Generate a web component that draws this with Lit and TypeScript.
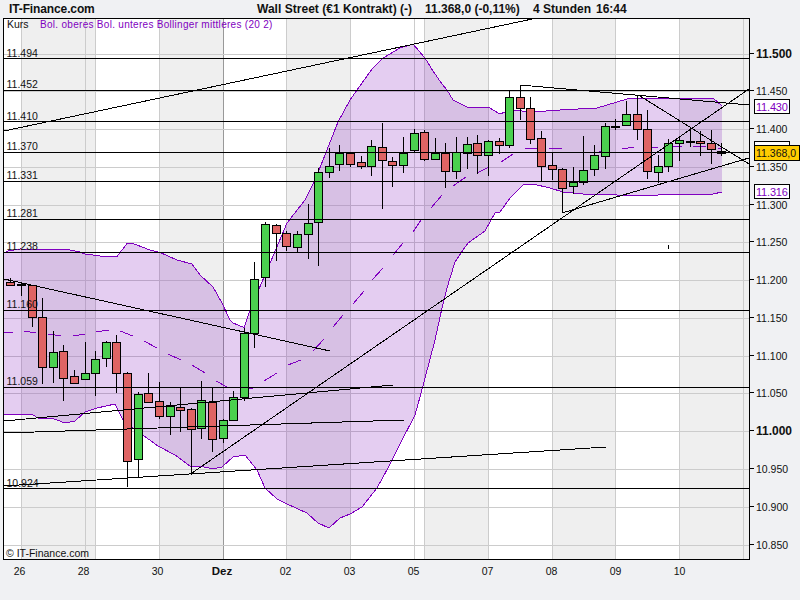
import { LitElement, html, css, svg } from "lit";
import { customElement } from "lit/decorators.js";

type Candle = [number, number, number, number, number, "r" | "g" | "d"];
type Pt = [number, number];

const CANDLES: Candle[] = [
  [10.5, 278, 285, 282, 285, "r"], [21.7, 282, 295, 284, 284, "d"], [32.3, 285, 326, 285, 317, "r"],
  [42.6, 298, 383, 317, 367, "r"], [53.3, 331, 382, 352, 367, "g"], [63.5, 345, 400, 351, 378, "r"],
  [74.3, 370, 383, 376, 383, "r"], [85.3, 342, 379, 373, 379, "g"], [95.3, 351, 395, 359, 373, "g"],
  [106, 341, 366, 342, 358, "g"], [116.3, 335, 392, 342, 373, "r"], [127.3, 372, 486, 373, 461, "r"],
  [138.3, 392, 477, 394, 459, "g"], [148.3, 373, 402, 393, 402, "r"], [159.3, 382, 418, 401, 416, "r"],
  [170.3, 402, 434, 406, 416, "g"], [180.3, 388, 431, 407, 410, "r"], [191.3, 408, 474, 409, 429, "r"],
  [201.3, 381, 438, 400, 428, "g"], [212.3, 388, 451, 402, 439, "r"], [223.7, 419, 442, 420, 438, "g"],
  [233.7, 391, 420, 397, 420, "g"], [244.3, 328, 400, 333, 397, "g"], [254.3, 262, 347, 279, 333, "g"],
  [265.3, 222, 286, 224, 277, "g"], [276.3, 224, 260, 225, 233, "r"], [286.3, 231, 250, 233, 246, "r"],
  [297.3, 231, 251, 234, 247, "g"], [308.3, 204, 258, 223, 234, "g"], [318.7, 168, 265, 172, 222, "g"],
  [329.3, 148, 177, 166, 172, "g"], [339.7, 145, 170, 153, 164, "g"], [350.3, 152, 166, 153, 164, "r"],
  [361.3, 156, 168, 162, 166, "r"], [371.3, 140, 175, 146, 166, "g"], [382.3, 123, 208, 147, 160, "r"],
  [392.7, 157, 186, 161, 165, "r"], [403.5, 137, 172, 153, 165, "g"], [414.3, 129, 152, 133, 150, "g"],
  [424.7, 130, 160, 132, 159, "r"], [435.3, 138, 159, 153, 159, "g"], [445.3, 143, 187, 153, 171, "r"],
  [456.3, 137, 178, 152, 171, "g"], [467.3, 137, 168, 144, 153, "g"], [477.7, 135, 173, 143, 155, "r"],
  [488.3, 140, 175, 141, 155, "g"], [499.3, 138, 153, 141, 145, "r"], [509.3, 91, 147, 97, 145, "g"],
  [520.3, 85, 119, 97, 108, "r"], [530.3, 97, 143, 108, 139, "r"], [541.3, 131, 181, 138, 166, "r"],
  [552.3, 152, 179, 165, 169, "r"], [562.3, 168, 211, 169, 188, "r"], [573.3, 167, 193, 182, 186, "g"],
  [583.3, 136, 184, 170, 182, "g"], [594.3, 145, 175, 155, 169, "g"], [605.3, 123, 168, 126, 156, "g"],
  [615.3, 119, 129, 126, 126, "d"], [626.7, 101, 125, 114, 125, "g"], [637.3, 95, 139, 114, 129, "r"],
  [647.3, 110, 178, 129, 171, "r"], [658.3, 155, 182, 166, 172, "g"], [668.7, 139, 171, 143, 166, "g"],
  [679.3, 138, 160, 140, 143, "g"], [690.3, 128, 146, 141, 141, "d"], [700.3, 131, 155, 141, 143, "r"],
  [711.3, 130, 163, 143, 149, "r"], [721.7, 143, 155, 151, 153, "r"],
];

const UPPER: Pt[] = [
  [4, 253], [8, 251], [20, 249], [68, 249.5], [80, 252], [85, 254], [100, 256], [117, 256.5], [127, 243.5],
  [133, 243.5], [150, 250], [160, 252.5], [177, 260], [192, 264], [200, 275], [213, 287], [222, 303],
  [230, 320], [233, 323], [244, 327.5], [252, 305], [265, 275], [287, 223], [305, 200], [315, 180], [325, 155],
  [338, 122], [350, 100], [357, 90], [372, 69], [383, 58], [400, 48], [413, 44], [425, 58], [433, 71],
  [442, 84], [447, 90], [453, 100], [467, 107], [488, 107], [500, 114], [510, 110], [533, 112], [560, 110],
  [597, 108], [627, 99], [640, 98], [687, 98], [713, 98], [722, 106],
];

const LOWER: Pt[] = [
  [4, 414], [33, 415], [38, 418], [53, 418.5], [65, 423], [75, 421], [85, 412], [97, 408], [115, 404],
  [125, 424], [133, 428], [158, 446], [175, 455], [190, 466], [200, 466], [213, 469], [222, 467], [233, 457],
  [245, 455], [257, 470], [265, 488], [277, 499], [287, 504], [307, 513], [318, 523], [329, 528], [340, 518],
  [350, 514], [362, 507], [377, 488], [388, 468], [400, 444], [415, 415], [420, 397], [435, 340], [442, 308],
  [447, 288], [455, 262], [463, 250], [468, 243], [485, 231], [495, 213], [500, 212], [510, 198], [517, 191],
  [523, 185], [533, 184], [550, 188], [563, 192], [583, 194], [597, 194], [617, 195], [650, 196], [667, 194],
  [713, 194], [722, 192],
];

const MID: number[][] = [
  [4, 333, 13, 332], [24, 331, 36, 333], [48, 334, 61, 336], [73, 336, 85, 334], [96, 332, 109, 330],
  [120, 331, 133, 336], [144, 341, 157, 348], [168, 354, 181, 360], [192, 365, 205, 373], [216, 381, 227, 387],
  [241, 391, 253, 388], [264, 381, 277, 373], [288, 365, 301, 360], [313, 351, 324, 339], [333, 327, 343, 315],
  [353, 304, 364, 291], [372, 280, 383, 268], [393, 255, 403, 243], [413, 232, 421, 220], [431, 208, 442, 195],
  [453, 186, 466, 177], [477, 173, 489, 167], [501, 162, 513, 154], [525, 149, 537, 148], [549, 148, 562, 149],
  [573, 152, 578, 152], [599, 152, 609, 150], [622, 149, 634, 147], [646, 147, 658, 147], [669, 146, 682, 146],
  [693, 146, 706, 146], [718, 148, 722, 149],
];

const TRENDS: number[][] = [
  [4, 131, 537, 18], [4, 279, 330, 351], [4, 421, 393, 385], [4, 433, 404, 420], [4, 486, 606, 447],
  [192, 473, 749, 89], [562, 213, 749, 158], [520, 85, 749, 105], [640, 96, 749, 164],
];

const SHADE: [number, number][] = [[21, 95], [159, 223], [286, 350], [424, 488], [552, 615], [679, 749]];
const VGRID = [21, 85, 95, 159, 286, 350, 414, 424, 488, 552, 615, 679, 743];
const TICKS: [number, string, boolean][] = [
  [54, "11.500", true], [91, "11.450", false], [129, "11.400", false], [167, "11.350", false],
  [205, "11.300", false], [242, "11.250", false], [280, "11.200", false], [318, "11.150", false],
  [356, "11.100", false], [393, "11.050", false], [431, "11.000", true], [469, "10.950", false],
  [507, "10.900", false], [545, "10.850", false],
];
const LEVELS = [58, 90, 121, 152, 181, 219, 252, 310, 387, 488];
const LEFT_LABELS: [number, string][] = [
  [57, "11.494"], [88, "11.452"], [120, "11.410"], [150, "11.370"], [179, "11.331"], [217, "11.281"],
  [250, "11.238"], [308, "11.160"], [385, "11.059"], [487, "10.924"],
];
const DAYS: [number, string, boolean][] = [
  [19.5, "26", false], [83.5, "28", false], [157.5, "30", false], [222, "Dez", true], [285.5, "02", false],
  [349.5, "03", false], [413.5, "05", false], [487.5, "07", false], [551.5, "08", false], [615.5, "09", false],
  [679.5, "10", false],
];

const pts = (p: Pt[]) => p.map(([x, y]) => `${x},${y}`).join(" ");

@customElement("app-root")
export class AppRoot extends LitElement {
  static styles = css`
    :host {
      display: block;
      width: 800px;
      height: 600px;
      background: #f0f1f3;
      overflow: hidden;
      font-family: "Liberation Sans", Arial, sans-serif;
    }
    .head {
      display: flex;
      height: 18px;
      padding-left: 9px;
      font-size: 12px;
      font-weight: 700;
      line-height: 19px;
      color: #111;
      white-space: nowrap;
    }
    .brand { width: 248px; letter-spacing: -0.12px; }
    .title { width: 168px; letter-spacing: 0.03px; }
    .quote { width: 108px; }
    .period { width: 63px; }
    .chart { display: block; width: 800px; height: 582px; }
    .plot { fill: #fff; }
    .shade { fill: #efefef; }
    .grid { stroke: #ccc; stroke-width: 1; }
    .dez { stroke: #999; stroke-width: 1; }
    .band { fill: rgb(120, 5, 185); fill-opacity: 0.2; stroke: none; }
    .bol { fill: none; stroke: #8000c0; stroke-width: 1; }
    .level { stroke: #000; stroke-width: 1; }
    .trend { stroke: #000; stroke-width: 1; }
    .frame { fill: none; stroke: #000; stroke-width: 1; }
    .wick { stroke: #000; stroke-width: 1; }
    .r { fill: #df6464; stroke: #000; stroke-width: 1; }
    .g { fill: #4bd04f; stroke: #000; stroke-width: 1; }
    .dash { fill: #000; }
    text { font-family: "Liberation Sans", Arial, sans-serif; font-size: 10.5px; fill: #111; }
    .b { font-weight: 700; font-size: 12px; }
    .legend { font-size: 10px; letter-spacing: 0.29px; }
    .legend-p { fill: #8000c0; }
    .copy { font-size: 10.5px; }
    .boxw { fill: #fff; stroke: #000; stroke-width: 1; }
    .boxo { fill: #fc0; stroke: #000; stroke-width: 1; }
    .plabel { fill: #8000c0; font-size: 11px; letter-spacing: -0.2px; }
    .day { text-anchor: middle; }
    .day-b { font-size: 11.5px; font-weight: 700; text-anchor: middle; }
  `;

  private candle([x, hi, lo, top, bot, kind]: Candle) {
    const col = Math.floor(x);
    const wick = svg`<line class="wick" x1=${col + 0.5} x2=${col + 0.5} y1=${hi} y2=${lo + 1}></line>`;
    if (kind === "d") {
      return svg`${wick}<rect class="dash" x=${col - 4} y=${top} width="9" height="2"></rect>`;
    }
    return svg`${wick}<rect class=${kind} x=${col - 3.5} y=${top + 0.5} width="8" height=${bot - top}></rect>`;
  }

  render() {
    return html`
      <div class="head">
        <span class="brand">IT-Finance.com</span>
        <span class="title">Wall Street (€1 Kontrakt) (-)</span>
        <span class="quote">11.368,0 (-0,11%)</span>
        <span class="period">4 Stunden</span>
        <span>16:44</span>
      </div>
      <svg class="chart" viewBox="0 18 800 582" shape-rendering="crispEdges">
        <rect class="plot" x="3" y="18" width="746" height="541"></rect>
        ${SHADE.map(([a, b]) => svg`<rect class="shade" x=${a} y="19" width=${b - a} height="540"></rect>`)}
        ${VGRID.map((x) => svg`<line class="grid" x1=${x + 0.5} x2=${x + 0.5} y1="19" y2="559"></line>`)}
        <line class="dez" x1="223.5" x2="223.5" y1="19" y2="559"></line>
        ${TICKS.map(([y]) => svg`<line class="grid" x1="4" x2="749" y1=${y + 0.5} y2=${y + 0.5}></line>`)}

        <polygon class="band" points=${pts([...UPPER, ...[...LOWER].reverse()])}></polygon>
        <polyline class="bol" points=${pts(UPPER)}></polyline>
        <polyline class="bol" points=${pts(LOWER)}></polyline>
        ${MID.map(([a, b, c, d]) => svg`<line class="bol" x1=${a} y1=${b} x2=${c} y2=${d}></line>`)}

        ${CANDLES.map((c) => this.candle(c))}
        ${LEVELS.map((y) => svg`<line class="level" x1="4" x2="749" y1=${y + 0.5} y2=${y + 0.5}></line>`)}
        ${TRENDS.map(([a, b, c, d]) => svg`<line class="trend" x1=${a} y1=${b} x2=${c} y2=${d}></line>`)}
        <line class="wick" x1="668.5" x2="668.5" y1="245" y2="249"></line>

        <text x="7" y="28">Kurs</text>
        <text class="legend legend-p" x="40" y="28">Bol. oberes Bol. unteres Bollinger mittleres (20 2)</text>
        ${LEFT_LABELS.map(([y, t]) => svg`<text x="6.5" y=${y}>${t}</text>`)}
        <text class="copy" x="6" y="557">© IT-Finance.com</text>

        <rect class="frame" x="3.5" y="18.5" width="746" height="541"></rect>
        ${TICKS.map(([y, t, bold]) => svg`
          <line class="wick" x1="750" x2="754" y1=${y - 0.5} y2=${y - 0.5}></line>
          <text class=${bold ? "b" : ""} x="756" y=${y + 4}>${t}</text>`)}

        <rect class="boxw" x="754.5" y="99.5" width="35" height="14"></rect>
        <text class="plabel" x="756" y="110.5">11.430</text>
        <rect class="boxw" x="754.5" y="141.5" width="35" height="14"></rect>
        <rect class="boxo" x="754.5" y="145.5" width="45" height="15"></rect>
        <text x="756" y="157">11.368,0</text>
        <rect class="boxw" x="754.5" y="184.5" width="35" height="14"></rect>
        <text class="plabel" x="756" y="195.5">11.316</text>

        ${DAYS.map(([x, t, bold]) => svg`<text class=${bold ? "day-b" : "day"} x=${x} y="575">${t}</text>`)}
      </svg>
    `;
  }
}
